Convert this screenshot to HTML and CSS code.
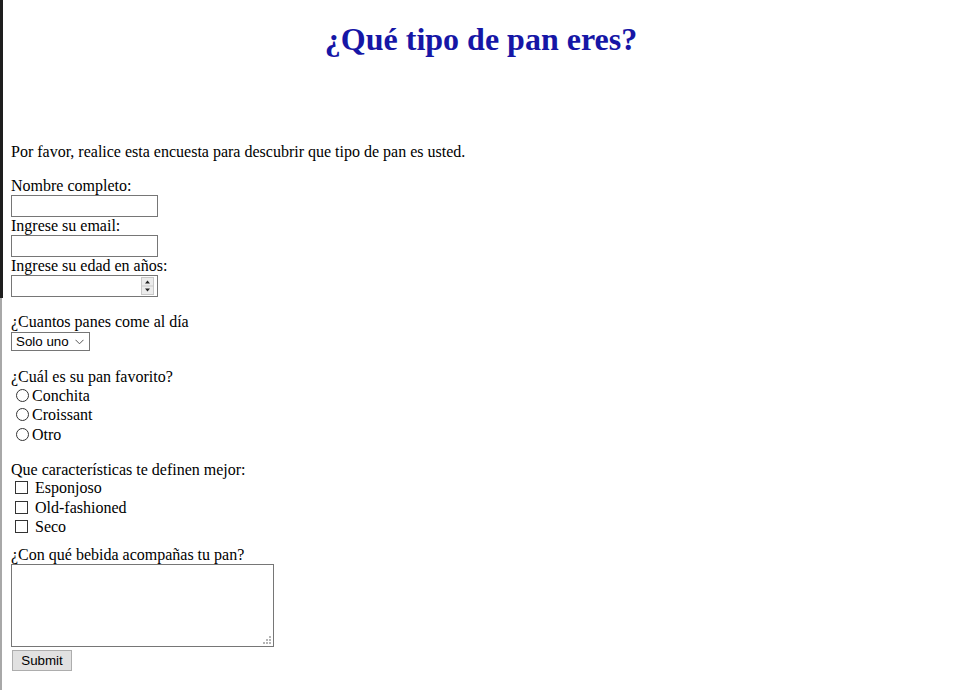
FILE: index.html
```html
<!DOCTYPE html>
<html lang="es">
<head>
<meta charset="utf-8">
<title>¿Qué tipo de pan eres?</title>
<link rel="stylesheet" href="styles.css">
</head>
<body>
<h1 class="title">¿Qué tipo de pan eres?</h1>
<main class="content">
  <p class="intro">Por favor, realice esta encuesta para descubrir que tipo de pan es usted.</p>
  <form class="survey">
    <label class="line" for="name">Nombre completo:</label>
    <input class="field" id="name" type="text">
    <label class="line" for="email">Ingrese su email:</label>
    <input class="field" id="email" type="email">
    <label class="line" for="age">Ingrese su edad en años:</label>
    <span class="num-wrap">
      <input class="field num" id="age" type="number">
      <svg class="spin" width="13" height="18" viewBox="0 0 13 18" aria-hidden="true">
        <rect x="0.5" y="0.5" width="12" height="17" fill="#ececec" stroke="#c9c9c9"/>
        <line x1="1" y1="9" x2="12" y2="9" stroke="#c9c9c9"/>
        <path d="M4 6.5 L6.5 3.5 L9 6.5 Z" fill="#222"/>
        <path d="M4 11.5 L6.5 14.5 L9 11.5 Z" fill="#222"/>
      </svg>
    </span>

    <label class="line gap" for="cuantos">¿Cuantos panes come al día</label>
    <span class="select-wrap">
      <select class="select" id="cuantos">
        <option>Solo uno</option>
        <option>Dos</option>
        <option>Más de dos</option>
      </select>
      <svg class="chev" width="9" height="6" viewBox="0 0 9 6" aria-hidden="true">
        <path d="M0.5 0.8 L4.5 4.8 L8.5 0.8" fill="none" stroke="#555" stroke-width="1"/>
      </svg>
    </span>

    <div class="line gap">¿Cuál es su pan favorito?</div>
    <label class="opt"><input class="radio" type="radio" name="pan">Conchita</label>
    <label class="opt"><input class="radio" type="radio" name="pan">Croissant</label>
    <label class="opt"><input class="radio" type="radio" name="pan">Otro</label>

    <div class="line gap">Que características te definen mejor:</div>
    <label class="opt"><input class="check" type="checkbox">Esponjoso</label>
    <label class="opt"><input class="check" type="checkbox">Old-fashioned</label>
    <label class="opt"><input class="check" type="checkbox">Seco</label>

    <label class="line gap-small" for="bebida">¿Con qué bebida acompañas tu pan?</label>
    <span class="area-wrap">
      <textarea class="area" id="bebida"></textarea>
      <svg class="grip" width="8" height="8" viewBox="0 0 8 8" aria-hidden="true">
        <rect x="6" y="0" width="2" height="2" fill="#b5b5b5"/>
        <rect x="3" y="3" width="2" height="2" fill="#b5b5b5"/>
        <rect x="6" y="3" width="2" height="2" fill="#b5b5b5"/>
        <rect x="0" y="6" width="2" height="2" fill="#b5b5b5"/>
        <rect x="3" y="6" width="2" height="2" fill="#b5b5b5"/>
        <rect x="6" y="6" width="2" height="2" fill="#b5b5b5"/>
      </svg>
    </span>
    <button class="submit" type="submit">Submit</button>
  </form>
</main>
</body>
</html>
```
FILE: styles.css
```css
html {
  background:
    linear-gradient(#1e1e1e, #1e1e1e) 0 0 / 3px 298px no-repeat,
    linear-gradient(#a8a8a8, #a8a8a8) 0 298px / 2px 100% no-repeat,
    #ffffff;
}

body {
  margin: 0;
  font-family: "Liberation Serif", "Times New Roman", serif;
  font-size: 16px;
  color: #000;
}

.title {
  margin: 21px 0 0;
  height: 37px;
  line-height: 37px;
  font-size: 32px;
  font-weight: bold;
  text-align: center;
  color: #1616a6;
  padding-left: 1px;
}

.content {
  padding-left: 11px;
}

.intro {
  margin: 85px 0 16px;
  line-height: 18px;
}

.survey {
  display: flex;
  flex-direction: column;
  align-items: flex-start;
}

.line {
  display: block;
  line-height: 18px;
  height: 18px;
}

.gap {
  margin-top: 16px;
}

.gap-small {
  margin-top: 8.5px;
}

.field {
  box-sizing: border-box;
  width: 147px;
  height: 22px;
  margin: 0;
  border: 1px solid #767676;
  background: #fff;
  padding: 1px 2px;
  font-family: Arial, "Liberation Sans", sans-serif;
  font-size: 13.33px;
}

.num-wrap {
  position: relative;
  display: block;
  width: 147px;
  height: 22px;
}

.num {
  -moz-appearance: textfield;
}

.num::-webkit-inner-spin-button,
.num::-webkit-outer-spin-button {
  -webkit-appearance: none;
  margin: 0;
}

.spin {
  position: absolute;
  right: 4px;
  top: 2px;
}

.select-wrap {
  position: relative;
  display: block;
  width: 79px;
  height: 19px;
  margin: 1px 0 1px;
}

.select {
  -webkit-appearance: none;
  appearance: none;
  box-sizing: border-box;
  width: 79px;
  height: 19px;
  margin: 0;
  border: 1px solid #767676;
  border-radius: 0;
  background: #fff;
  padding: 0 0 0 4px;
  font-family: Arial, "Liberation Sans", sans-serif;
  font-size: 13.33px;
  line-height: 17px;
  color: #000;
}

.chev {
  position: absolute;
  right: 6px;
  top: 7px;
  pointer-events: none;
}

.opt {
  display: flex;
  align-items: center;
  height: 19.5px;
  line-height: 18px;
}

.radio {
  -webkit-appearance: none;
  appearance: none;
  box-sizing: border-box;
  width: 13px;
  height: 13px;
  margin: 0 3px 1px 5px;
  border: 1px solid #333;
  border-radius: 50%;
  background: #fff;
}

.check {
  -webkit-appearance: none;
  appearance: none;
  box-sizing: border-box;
  width: 13px;
  height: 13px;
  margin: 0 7px 1px 4px;
  border: 1px solid #333;
  border-radius: 0;
  background: #fff;
}

.area-wrap {
  position: relative;
  display: block;
  width: 263px;
  height: 83px;
}

.area {
  display: block;
  box-sizing: border-box;
  width: 263px;
  height: 83px;
  margin: 0;
  border: 1px solid #767676;
  padding: 2px;
  resize: none;
  font-family: "Liberation Mono", monospace;
  font-size: 13.33px;
}

.grip {
  position: absolute;
  right: 3px;
  bottom: 3px;
}

.submit {
  box-sizing: border-box;
  width: 60px;
  height: 21px;
  margin: 3px 0 0 1px;
  padding: 0;
  border: 1px solid #adadad;
  border-radius: 0;
  background: #e1e1e1;
  font-family: Arial, "Liberation Sans", sans-serif;
  font-size: 13.33px;
  color: #000;
}
```
